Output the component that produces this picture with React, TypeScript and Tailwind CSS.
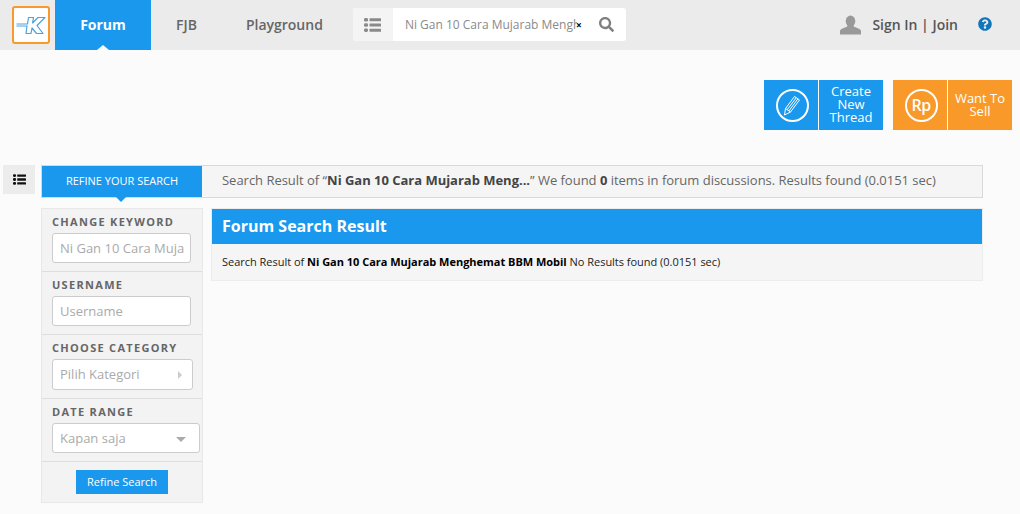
import { FaSearch, FaQuestionCircle } from "react-icons/fa";

const font = { fontFamily: '"Open Sans", sans-serif' };

const KaskusLogo = () => (
  <div className="w-[38px] h-[38px] bg-white border-2 border-[#f8992a] rounded-[3px] flex items-center justify-center">
    <svg width="30" height="22" viewBox="0 0 30 22" fill="none" stroke="#4aa3de" strokeWidth="1.2" strokeLinejoin="round">
      <path d="M0.5 10 H11.5 L12.5 3.5 H17.5 L16.6 9 L22 3.5 H29 L21 11.5 L27 19.5 H20.5 L16 14 L15 19.5 H10 L11 12 H0.5" />
    </svg>
  </div>
);

const ListIcon = ({ className, w, h }: { className: string; w: number; h: number }) => (
  <svg width={w} height={h} viewBox="0 0 17 14" fill="currentColor" className={className}>
    <rect x="0" y="0" width="4" height="3.6" rx="1.4" />
    <rect x="0" y="5.2" width="4" height="3.6" rx="1.4" />
    <rect x="0" y="10.4" width="4" height="3.6" rx="1.4" />
    <rect x="5.5" y="0.3" width="11.5" height="3" rx="0.5" />
    <rect x="5.5" y="5.5" width="11.5" height="3" rx="0.5" />
    <rect x="5.5" y="10.7" width="11.5" height="3" rx="0.5" />
  </svg>
);

const UserIcon = () => (
  <svg width="21" height="20" viewBox="0 0 22 20" fill="#999">
    <ellipse cx="11" cy="6" rx="5" ry="6" />
    <path d="M0 20 V16.5 C0 13.5 6 13 8 11 H14 C16 13 22 13.5 22 16.5 V20 Z" />
  </svg>
);

const Field = ({ label, children, tall, last }: { label: string; children: React.ReactNode; tall?: boolean; last?: boolean }) => (
  <div className={`${tall ? "h-[64px]" : "h-[63px]"} pl-[10px] pt-[6px] ${last ? "" : "border-b border-[#ddd]"}`}>
    <div className="text-[11px] leading-[14px] font-bold tracking-[1.3px] text-[#666]">{label}</div>
    {children}
  </div>
);

const inputBox = "mt-[4px] bg-white border border-[#ccc] rounded-[3px] px-[7px] text-[13px] text-[#aaa] flex items-center justify-between overflow-hidden whitespace-nowrap";

export default function App() {
  return (
    <div className="w-[1020px] h-[514px] bg-[#fbfbfb] overflow-hidden" style={font}>
      <header className="h-[50px] bg-[#ebebeb] flex items-center pl-[12px] pr-[28px]">
        <KaskusLogo />
        <div className="relative ml-[5px] w-[96px] h-[50px] pb-[2px] bg-[#1998ed] text-white text-[14px] font-bold flex items-center justify-center">
          Forum
          <div className="absolute bottom-0 left-[42px] w-0 h-0 border-x-[6px] border-x-transparent border-b-[5px] border-b-[#fbfbfb]" />
        </div>
        <div className="ml-[25px] pb-[2px] text-[14px] font-semibold text-[#666]">FJB</div>
        <div className="ml-[49px] pb-[2px] text-[14px] font-semibold text-[#666]">Playground</div>
        <div className="ml-[30px] mb-[1px] w-[273px] h-[33px] rounded-[3px] overflow-hidden bg-white flex items-center">
          <div className="w-[40px] h-full bg-[#f4f4f4] flex items-center justify-center">
            <ListIcon w={17} h={14} className="text-[#8a8a8a]" />
          </div>
          <div className="ml-[12px] w-[172px] text-[12px] text-[#8a8a8a] overflow-hidden whitespace-nowrap">Ni Gan 10 Cara Mujarab Menghemat</div>
          <span className="-ml-[1px] text-[10px] font-bold text-black leading-none">×</span>
          <FaSearch size={15} className="ml-[17px] text-[#808080]" />
        </div>
        <div className="ml-auto flex items-center">
          <UserIcon />
          <div className="ml-[11px] pb-[2px] text-[14px] font-semibold text-[#555]">Sign In | Join</div>
          <FaQuestionCircle size={14} className="ml-[20px] mb-[2px] text-[#0f75bc]" />
        </div>
      </header>

      <div className="h-[115px] pt-[30px] pr-[8px] flex justify-end gap-[10px]">
        <div className="w-[119px] h-[50px] bg-[#1998ed] text-white flex">
          <div className="w-[55px] pl-[2px] border-r border-white flex items-center justify-center">
            <div className="w-[33px] h-[33px] rounded-full border-2 border-white flex items-center justify-center">
              <svg width="18" height="21" viewBox="0 0 18 21" fill="none" stroke="white" strokeWidth="1" strokeLinejoin="round">
                <path d="M1.5 20 L2.5 13.5 L11.5 1.5 L16.5 5 L7.5 17 Z M2.5 13.5 L7.5 17 M4.2 14.7 L13.2 2.8 M5.9 15.9 L14.9 3.9" />
              </svg>
            </div>
          </div>
          <div className="flex-1 pb-[2px] flex items-center justify-center text-center text-[13px] leading-[13px] font-medium">Create<br />New<br />Thread</div>
        </div>
        <div className="w-[119px] h-[50px] bg-[#f8992a] text-white flex">
          <div className="w-[55px] pl-[2px] border-r border-white flex items-center justify-center">
            <div className="w-[33px] h-[33px] rounded-full border-2 border-white flex items-center justify-center text-[16px] font-semibold tracking-[-0.5px]">Rp</div>
          </div>
          <div className="flex-1 flex items-center justify-center text-center text-[13px] leading-[13px] font-medium">Want To<br />Sell</div>
        </div>
      </div>

      <div className="flex pl-[3px] pr-[37px]">
        <div className="w-[32px] h-[29px] bg-[#ececec] flex items-center justify-center">
          <ListIcon w={13} h={11} className="text-[#111]" />
        </div>
        <div className="ml-[6px] flex-1 min-w-0">
          <div className="h-[33px] border border-[#d9d9d9] bg-[#f5f5f5] flex">
            <div className="relative w-[160px] bg-[#1998ed] text-white text-[11px] flex items-center justify-center">
              REFINE YOUR SEARCH
              <div className="absolute top-full left-[74px] w-0 h-0 border-x-[5px] border-x-transparent border-t-[5px] border-t-[#1998ed]" />
            </div>
            <div className="ml-[20px] pb-[2px] text-[13px] tracking-[-0.02px] text-[#666] flex items-center whitespace-nowrap">
              <span>Search Result of “<b className="text-[#444]">Ni Gan 10 Cara Mujarab Meng...</b>” We found <b className="text-[#444]">0</b> items in forum discussions. Results found (0.0151 sec)</span>
            </div>
          </div>

          <div className="mt-[10px] flex items-start">
            <aside className="w-[162px] h-[295px] bg-[#f3f3f3] border border-[#e8e8e8]">
              <Field label="CHANGE KEYWORD">
                <div className={`${inputBox} w-[139px] h-[30px] pt-[2px]`}>Ni Gan 10 Cara Muja</div>
              </Field>
              <Field label="USERNAME">
                <div className={`${inputBox} w-[139px] h-[30px] pt-[2px]`}>Username</div>
              </Field>
              <Field label="CHOOSE CATEGORY" tall>
                <div className={`${inputBox} w-[141px] h-[31px]`}>
                  Pilih Kategori
                  <div className="mr-[3px] w-0 h-0 border-y-[4px] border-y-transparent border-l-[4px] border-l-[#ccc]" />
                </div>
              </Field>
              <Field label="DATE RANGE">
                <div className={`${inputBox} w-[148px] h-[30px] pt-[2px]`}>
                  Kapan saja
                  <div className="mr-[6px] w-0 h-0 border-x-[5px] border-x-transparent border-t-[5px] border-t-[#aaa]" />
                </div>
              </Field>
              <div className="flex justify-center pt-[8px]">
                <div className="w-[92px] h-[24px] bg-[#1998ed] text-white text-[11px] flex items-center justify-center">Refine Search</div>
              </div>
            </aside>
            <main className="ml-[8px] flex-1 min-w-0 border border-[#ececec] bg-[#f5f5f5] h-[73px]">
              <div className="h-[35px] pb-[2px] bg-[#1998ed] text-white text-[16px] font-bold pl-[10px] flex items-center">Forum Search Result</div>
              <div className="pl-[10px] pt-[10px] text-[11px] leading-[15px] tracking-[-0.02px] text-[#222]">
                Search Result of <b className="text-black">Ni Gan 10 Cara Mujarab Menghemat BBM Mobil</b> No Results found (0.0151 sec)
              </div>
            </main>
          </div>
        </div>
      </div>
    </div>
  );
}
